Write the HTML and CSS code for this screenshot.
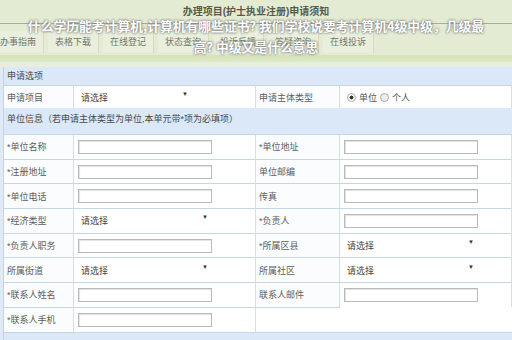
FILE: index.html
```html
<!DOCTYPE html>
<html lang="zh-CN">
<head>
    <meta charset="UTF-8">
    <title>办理项目(护士执业注册)申请须知</title>
    <link rel="stylesheet" href="styles.css">
</head>
<body>
    <div class="top">
        <div class="top_title">办理项目(护士执业注册)申请须知</div>
        <div class="tabs">
            <span class="tab">办事指南</span>
            <span class="tab">表格下载</span>
            <span class="tab">在线登记</span>
            <span class="tab">状态查询</span>
            <span class="tab">投诉反馈</span>
            <span class="tab">答疑咨询</span>
            <span class="tab">在线投诉</span>
        </div>
    </div>
    <div class="stripe"></div>

    <div class="form">
        <div class="sec_head">申请选项</div>
        <div class="grid grid_first">
            <div class="lab">申请项目</div>
            <div class="val"><div class="select select_short"><span>请选择</span><span class="arr">▼</span></div></div>
            <div class="lab">申请主体类型</div>
            <div class="val">
                <span class="radio radio_on"></span><span class="rtxt">单位</span>
                <span class="radio"></span><span class="rtxt">个人</span>
            </div>
        </div>

        <div class="sec_head sec_head2">单位信息（若申请主体类型为单位,本单元带*项为必填项）</div>
        <div class="grid">
            <div class="lab">*单位名称</div>
            <div class="val"><span class="inp"></span></div>
            <div class="lab">*单位地址</div>
            <div class="val"><span class="inp"></span></div>

            <div class="lab">*注册地址</div>
            <div class="val"><span class="inp"></span></div>
            <div class="lab">单位邮编</div>
            <div class="val"><span class="inp"></span></div>

            <div class="lab">*单位电话</div>
            <div class="val"><span class="inp"></span></div>
            <div class="lab">传真</div>
            <div class="val"><span class="inp"></span></div>

            <div class="lab">*经济类型</div>
            <div class="val"><div class="select"><span>请选择</span><span class="arr">▼</span></div></div>
            <div class="lab">*负责人</div>
            <div class="val"><span class="inp"></span></div>

            <div class="lab">*负责人职务</div>
            <div class="val"><span class="inp"></span></div>
            <div class="lab">*所属区县</div>
            <div class="val"><div class="select"><span>请选择</span><span class="arr">▼</span></div></div>

            <div class="lab">所属街道</div>
            <div class="val"><div class="select"><span>请选择</span><span class="arr">▼</span></div></div>
            <div class="lab">所属社区</div>
            <div class="val"><div class="select"><span>请选择</span><span class="arr">▼</span></div></div>

            <div class="lab">*联系人姓名</div>
            <div class="val"><span class="inp"></span></div>
            <div class="lab">联系人邮件</div>
            <div class="val"><span class="inp"></span></div>

            <div class="lab">*联系人手机</div>
            <div class="val"><span class="inp"></span></div>
            <div class="blank"></div>
            <div class="blank"></div>
        </div>
        <div class="foot"></div>
    </div>

    <div class="overlay">什么学历能考计算机,计算机有哪些证书? 我们学校说要考计算机4级中级，几级最<br>高? 中级又是什么意思</div>
</body>
</html>
```

FILE: styles.css
```css
body {
    margin: 0;
    width: 512px;
    height: 340px;
    overflow: hidden;
    background-color: #dfeaf6;
    font-family: "Liberation Sans", "Noto Sans CJK SC", sans-serif;
    color: #555;
    font-size: 9px;
    position: relative;
}

.top {
    background-color: #e4ebd3;
    height: 55px;
}

.top_title {
    height: 23px;
    line-height: 23px;
    text-align: center;
    font-weight: bold;
    font-size: 10px;
    color: #5a5a4a;
    border-bottom: 1px solid #a8ad9c;
}

.tabs {
    display: flex;
    margin-left: -7px;
    padding-top: 7px;
}

.tab {
    width: 50px;
    height: 22px;
    line-height: 22px;
    margin-right: 4px;
    text-align: center;
    color: #73776a;
    background-color: #e9efdc;
    border-right: 1px solid #d3dcbc;
}

.stripe {
    height: 7px;
    background: linear-gradient(#d5e2b6, #dde8c6);
    border-bottom: 5px solid #e8eede;
}

.form {
    margin-left: 3px;
    border-left: 1px solid #c3d3e3;
}

.sec_head {
    height: 18px;
    line-height: 18px;
    padding-left: 3px;
    background-color: #dae8f8;
    color: #4a4a4a;
}

.sec_head2 {
    height: 26px;
    line-height: 22px;
}

.grid {
    display: grid;
    grid-template-columns: 70px 182px 84px 1fr;
    grid-auto-rows: 24.7px;
    background-color: #fff;
}

.grid_first {
    grid-auto-rows: 23px;
}

.lab, .val {
    display: flex;
    align-items: center;
    border-top: 1px solid #c7d6e4;
    border-right: 1px solid #d3dee8;
}

.lab {
    padding-left: 3px;
    background-color: #fafcfd;
    color: #5c5c5c;
}

.val {
    padding-left: 4px;
    background-color: #fff;
}

.blank {
    border-top: 1px solid #c7d6e4;
    background-color: #fff;
}

.blank + .blank {
    border-top: none;
}

.inp {
    width: 132px;
    height: 12px;
    border: 1px solid #b9b9b9;
    box-shadow: inset 1px 1px 1px #e2e2e2;
    background-color: #fff;
}

.select {
    width: 127px;
    display: flex;
    justify-content: space-between;
    padding-left: 3px;
    color: #444;
}

.select_short {
    width: 107px;
}

.arr {
    font-size: 6px;
    color: #333;
}

.radio {
    width: 7px;
    height: 7px;
    border-radius: 50%;
    border: 1px solid #aaa;
    background-color: #eee;
    margin-left: 3px;
    margin-right: 3px;
}

.radio_on {
    background: radial-gradient(#333 35%, #fff 45%);
}

.rtxt {
    color: #555;
}

.foot {
    height: 14px;
    background-color: #dae8f8;
    border-top: 1px solid #c7d6e4;
}

.overlay {
    position: absolute;
    left: 0;
    top: 15px;
    width: 512px;
    text-align: center;
    color: #fff;
    font-family: "Noto Sans CJK SC", sans-serif;
    font-weight: bold;
    font-size: 12.8px;
    line-height: 21px;
    text-shadow: 0 0 2px #6a6a6a, 0 0 3px #8a8a8a;
}
```
